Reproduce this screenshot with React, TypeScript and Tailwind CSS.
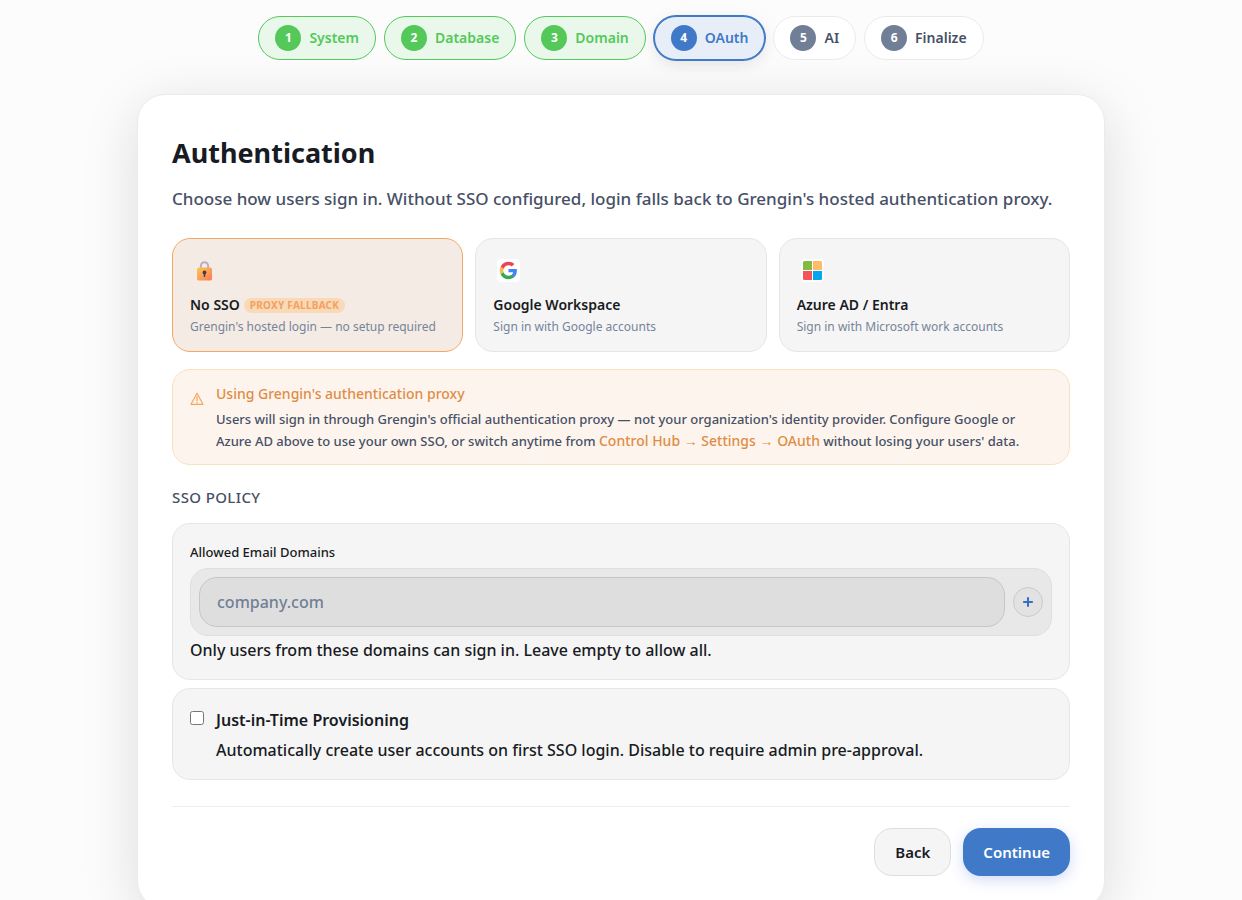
import { useState } from "react";
import { Plus } from "lucide-react";
import clsx from "clsx";

type Provider = "none" | "google" | "azure";

const steps = ["System", "Database", "Domain", "OAuth", "AI", "Finalize"];
const currentStep = 3;

function LockIcon() {
  return (
    <svg viewBox="1.5 0 20 24" className="h-6 w-5 shrink-0" aria-hidden="true">
      <defs>
        <linearGradient id="lock-body" x1="0" y1="0" x2="1" y2="1">
          <stop offset="0" stopColor="#fdc951" />
          <stop offset="1" stopColor="#fb7a58" />
        </linearGradient>
      </defs>
      <path
        d="M6.4 10V6.8a3.6 3.6 0 0 1 7.2 0V10"
        fill="none"
        stroke="#b9aec4"
        strokeWidth="2"
      />
      <rect x="2.5" y="8.5" width="15" height="13" rx="1.8" fill="url(#lock-body)" />
      <circle cx="10" cy="13.5" r="1.9" fill="#4b3a55" />
      <rect x="9.2" y="14" width="1.6" height="4" rx="0.8" fill="#4b3a55" />
    </svg>
  );
}

function GoogleIcon() {
  return (
    <svg viewBox="0 0 24 24" className="size-[19px]" aria-hidden="true">
      <path
        fill="#4285f4"
        d="M22.56 12.25c0-.78-.07-1.53-.2-2.25H12v4.26h5.92a5.06 5.06 0 0 1-2.2 3.32v2.77h3.57c2.08-1.92 3.27-4.74 3.27-8.1z"
      />
      <path
        fill="#34a853"
        d="M12 23c2.97 0 5.46-.98 7.28-2.66l-3.57-2.77c-.98.66-2.23 1.06-3.71 1.06-2.86 0-5.29-1.93-6.16-4.53H2.18v2.84C3.99 20.53 7.7 23 12 23z"
      />
      <path
        fill="#fbbc4d"
        d="M5.84 14.09A6.6 6.6 0 0 1 5.49 12c0-.73.13-1.43.35-2.09V7.07H2.18A11 11 0 0 0 1 12c0 1.78.43 3.45 1.18 4.93l3.66-2.84z"
      />
      <path
        fill="#ee4257"
        d="M12 5.38c1.62 0 3.06.56 4.21 1.64l3.15-3.15C17.45 2.09 14.97 1 12 1 7.7 1 3.99 3.47 2.18 7.07l3.66 2.84C6.71 7.31 9.14 5.38 12 5.38z"
      />
    </svg>
  );
}

function MicrosoftIcon() {
  return (
    <svg viewBox="0 0 19 19" className="size-[19px]" aria-hidden="true">
      <path fill="#80bc42" d="M1.5 0H9v9H0V1.5A1.5 1.5 0 0 1 1.5 0z" />
      <path fill="#ffbb66" d="M10 0h7.5A1.5 1.5 0 0 1 19 1.5V9h-9z" />
      <path fill="#f35558" d="M0 10h9v9H1.5A1.5 1.5 0 0 1 0 17.5z" />
      <path fill="#05a6f0" d="M10 10h9v7.5a1.5 1.5 0 0 1-1.5 1.5H10z" />
    </svg>
  );
}

function WarningIcon() {
  return (
    <svg
      viewBox="0 0 14 13"
      className="mt-2.5 h-[13px] w-3.5 shrink-0"
      fill="none"
      stroke="#f5a660"
      aria-hidden="true"
    >
      <path d="M7 1.2L13 12.3H1z" strokeWidth="1.2" strokeLinejoin="round" />
      <path d="M7 4.2v4.8M7 9.8v1.4" strokeWidth="1.3" />
    </svg>
  );
}

const providers = [
  {
    id: "none" as Provider,
    name: "No SSO",
    badge: "PROXY FALLBACK",
    hint: "Grengin's hosted login — no setup required",
    icon: <LockIcon />,
  },
  {
    id: "google" as Provider,
    name: "Google Workspace",
    hint: "Sign in with Google accounts",
    icon: <GoogleIcon />,
  },
  {
    id: "azure" as Provider,
    name: "Azure AD / Entra",
    hint: "Sign in with Microsoft work accounts",
    icon: <MicrosoftIcon />,
  },
];

export default function App() {
  const [provider, setProvider] = useState<Provider>("none");
  const [domain, setDomain] = useState("");
  const [jit, setJit] = useState(false);

  return (
    <div className="min-h-screen bg-[#fcfcfc] px-6 pt-4 pb-10 font-['Noto_Sans',sans-serif] font-medium text-[#181b23]">
      {/* steps */}
      <nav aria-label="Setup steps">
        <ol className="flex flex-wrap items-center justify-center gap-2">
          {steps.map((step, i) => (
            <li
              key={step}
              aria-current={i === currentStep ? "step" : undefined}
              className={clsx(
                "flex h-11 items-center gap-2 rounded-full border px-4 text-sm font-semibold",
                i < currentStep && "border-[#54c95a] bg-[#e9f8eb] text-[#54c95a]",
                i === currentStep &&
                  "border-[#3f79c7] bg-[#e8eef8] text-[#3f79c7] shadow-[0_4px_16px_rgba(0,0,0,0.1)] ring-1 ring-[#3f79c7]",
                i > currentStep && "border-[#ebebeb] bg-white text-[#475066]"
              )}
            >
              <span
                className={clsx(
                  "flex size-[26px] items-center justify-center rounded-full text-xs font-bold text-white",
                  i < currentStep && "bg-[#54c95a]",
                  i === currentStep && "bg-[#3f79c7]",
                  i > currentStep && "bg-[#717f96]"
                )}
              >
                {i + 1}
              </span>
              {step}
            </li>
          ))}
        </ol>
      </nav>

      <main className="mx-auto mt-[34px] max-w-[968px] rounded-[28px] border border-[#ebebeb] bg-white px-[34px] pt-10 pb-8 shadow-[0_12px_56px_rgba(0,0,0,0.13)]">
        <h1 className="text-[27px] leading-9 font-bold">Authentication</h1>
        <p className="mt-3 text-[17px] leading-8 text-[#475066]">
          Choose how users sign in. Without SSO configured, login falls back to Grengin's hosted
          authentication proxy.
        </p>

        {/* providers */}
        <div className="mt-[23px] grid grid-cols-3 gap-3">
          {providers.map((p) => (
            <button
              key={p.id}
              type="button"
              aria-pressed={provider === p.id}
              onClick={() => setProvider(p.id)}
              className={clsx(
                "rounded-[18px] border px-[17px] pt-5 pb-3.5 text-left",
                provider === p.id ? "border-[#f7a565] bg-[#f4ece4]" : "border-[#e6e6e6] bg-[#f5f5f5]"
              )}
            >
              <span
                className={clsx(
                  "ml-1 flex size-[23px] items-center justify-center rounded",
                  p.id !== "none" && "bg-white"
                )}
              >
                {p.icon}
              </span>
              <span className="mt-[11px] flex items-center gap-1 text-sm leading-6 font-semibold">
                {p.name}
                {p.badge && (
                  <span className="rounded-full bg-[#f8d9b8] px-1.5 text-[10px] leading-[15px] font-bold tracking-wide text-[#f5a05c]">
                    {p.badge}
                  </span>
                )}
              </span>
              <span className="block text-xs leading-5 font-normal text-[#76849a]">{p.hint}</span>
            </button>
          ))}
        </div>

        {/* proxy notice */}
        <div className="mt-[17px] flex gap-3 rounded-[18px] border border-[#fbe0bf] bg-[#fdf5ed] px-[17px] py-3">
          <WarningIcon />
          <div className="text-[13px] leading-[22px] text-[#475066]">
            <p className="mb-0.5 text-sm leading-6 text-[#e08c46]">Using Grengin's authentication proxy</p>
            <p>
              Users will sign in through Grengin's official authentication proxy — not your
              organization's identity provider. Configure Google or Azure AD above to use your own
              SSO, or switch anytime from{" "}
              <a href="#oauth" className="text-sm leading-[22px] text-[#e08c46]">
                Control Hub → Settings → OAuth
              </a>{" "}
              without losing your users' data.
            </p>
          </div>
        </div>

        {/* policy */}
        <h2 className="mt-[18px] text-[15px] leading-7 tracking-wide text-[#475066]">SSO POLICY</h2>
        <section className="mt-3 rounded-[18px] border border-[#e6e6e6] bg-[#f5f5f5] px-[17px] pt-4 pb-[15px]">
          <label htmlFor="domain" className="block text-[13px] leading-6">
            Allowed Email Domains
          </label>
          <div className="mt-1 flex items-center gap-2 rounded-[18px] border border-[#dfdfdf] bg-[#e8e8e8] p-2">
            <input
              id="domain"
              value={domain}
              onChange={(e) => setDomain(e.target.value)}
              placeholder="company.com"
              className="h-[50px] min-w-0 flex-1 rounded-[18px] border border-[#c6c6c6] bg-[#dedede] px-[17px] text-base placeholder:text-[#717f96]"
            />
            <button
              type="button"
              aria-label="Add domain"
              className="flex size-[30px] items-center justify-center rounded-full border border-[#cacaca] bg-[#e2e2e2] text-[#3470c4]"
            >
              <Plus size={14} strokeWidth={3.5} />
            </button>
          </div>
          <p className="text-base leading-7">Only users from these domains can sign in. Leave empty to allow all.</p>
        </section>

        <section className="mt-2 flex items-start gap-3 rounded-[18px] border border-[#e6e6e6] bg-[#f5f5f5] px-[17px] pt-4 pb-3.5">
          <input
            id="jit"
            type="checkbox"
            checked={jit}
            onChange={(e) => setJit(e.target.checked)}
            className="mt-1.5 size-3.5 shrink-0"
          />
          <div className="text-base leading-[30px]">
            <label htmlFor="jit" className="block font-semibold">
              Just-in-Time Provisioning
            </label>
            <p>Automatically create user accounts on first SSO login. Disable to require admin pre-approval.</p>
          </div>
        </section>

        <footer className="mt-[26px] flex justify-end gap-3 border-t border-[#ededed] pt-[21px]">
          <button
            type="button"
            className="h-12 rounded-[18px] border border-[#dedede] bg-[#f5f5f5] px-5 text-[15px] font-semibold"
          >
            Back
          </button>
          <button
            type="button"
            className="h-12 rounded-[18px] bg-[#3f79c7] px-5 text-[15px] font-semibold text-white shadow-[0_4px_14px_rgba(80,110,220,0.25)]"
          >
            Continue
          </button>
        </footer>
      </main>
    </div>
  );
}
